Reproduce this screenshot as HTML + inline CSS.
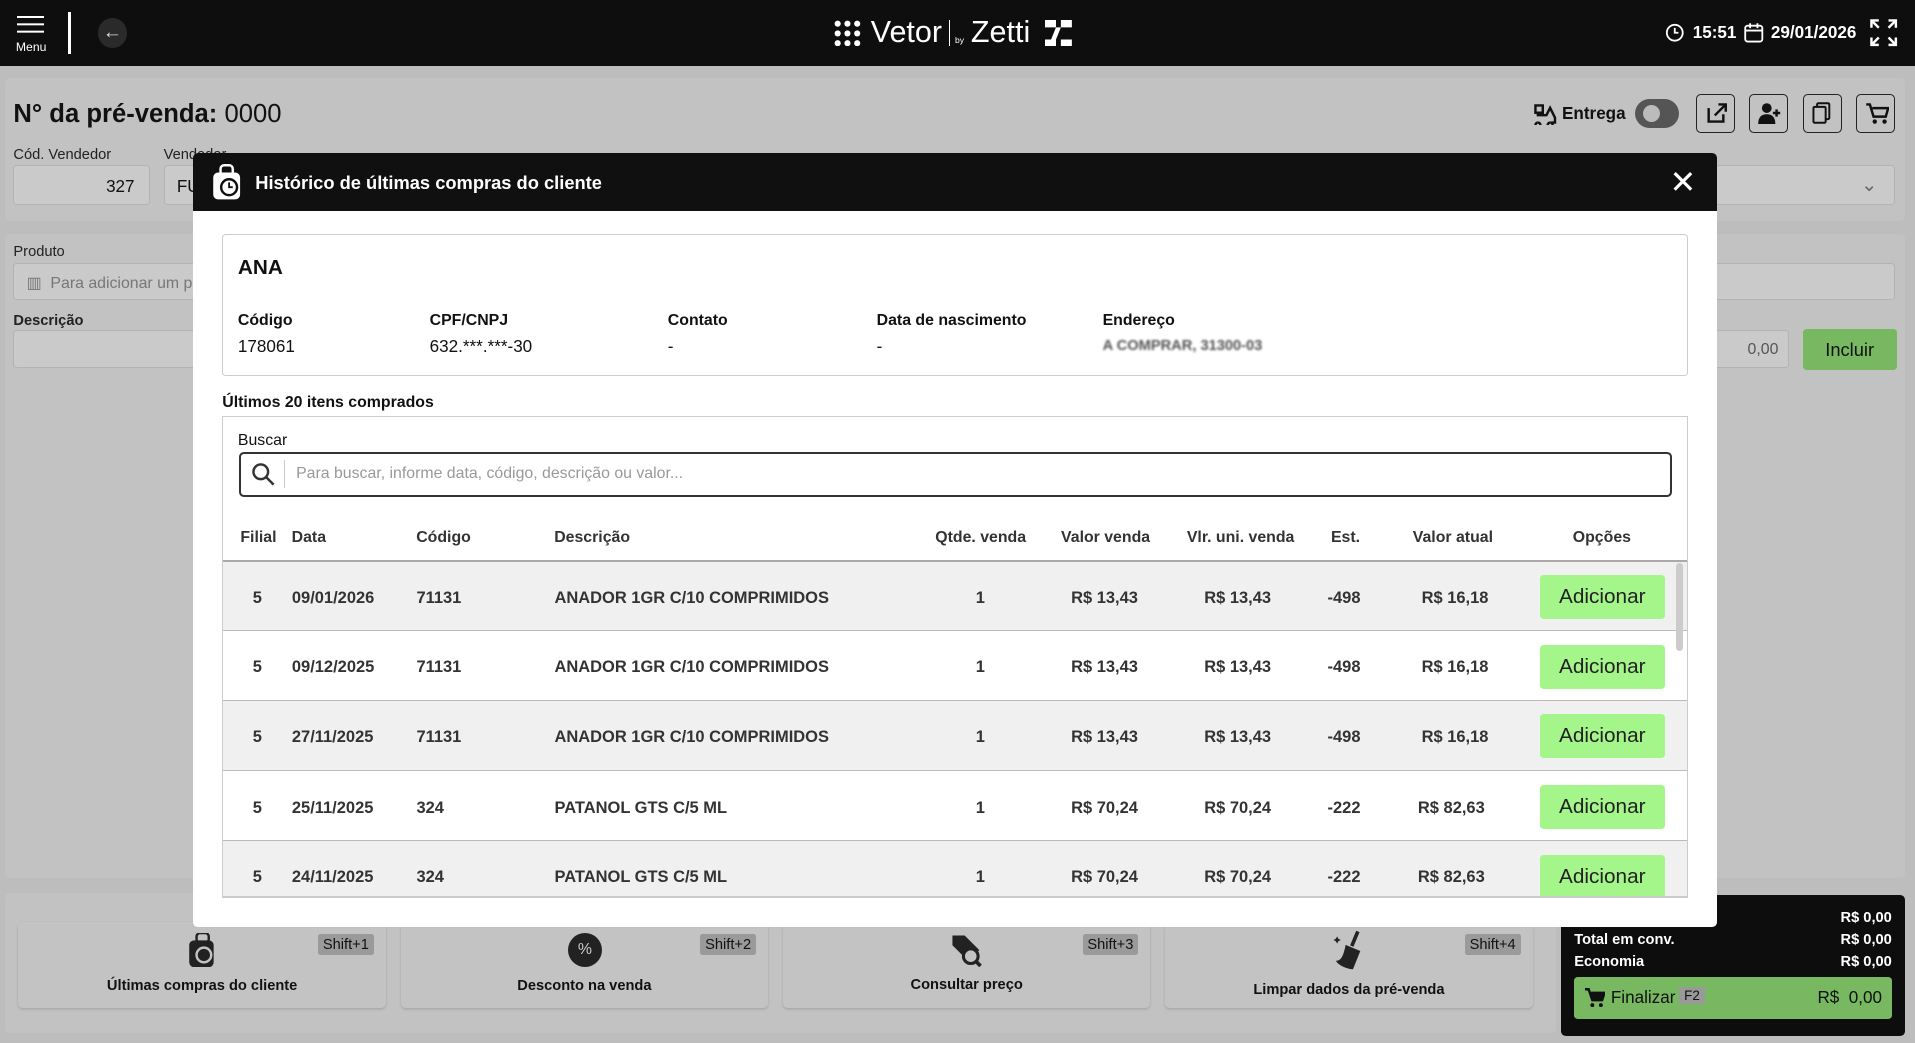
<!DOCTYPE html>
<html><head><meta charset="utf-8"><style>
*{box-sizing:border-box;margin:0;padding:0}
html,body{width:1915px;height:1043px;overflow:hidden;background:#b5b5b5}
#z{zoom:1.22130;width:1568px;height:854px;position:relative;font-family:"Liberation Sans",Arial,sans-serif;color:#111;background:#bdbdbd}
.a{position:absolute}
.hdr{left:0;top:0;width:1568px;height:54px;background:#0e0e0e;color:#fff}
.panel{background:#c2c2c2;border-radius:4px}
.lbl{font-size:12px;color:#222}
.inp{background:#cacaca;border:1px solid #b3b3b3;border-radius:3px}
.ib{width:32px;height:32px;border:1.5px solid #222;border-radius:4px}
.ib svg{position:absolute;left:6px;top:6px}
.card{background:#c3c3c3;border-radius:4px;box-shadow:0 1px 2px rgba(0,0,0,.15)}
.sh{background:#9a9a9a;font-size:12px;padding:2px 4px;border-radius:2px}
.modal{left:158px;top:125px;width:1248px;height:634px;background:#fff;border-radius:4px;overflow:hidden}
.mh{left:0;top:0;width:1248px;height:48px;background:#101010;color:#fff}
.th{font-size:13px;font-weight:bold;color:#333}
.row{left:25px;width:1198px;height:57px;border-bottom:1px solid #bbb;font-size:13.5px;font-weight:bold;color:#333}
.row span{position:absolute;top:22px}
.btn{position:absolute;left:1078px;top:11px;width:102px;height:36px;background:#a4f58a;border-radius:3px;font-size:17px;font-weight:normal;color:#222;text-align:center;line-height:36px}
</style></head><body><div id="z">
<div class="a hdr">
 <div class="a" style="left:14px;top:13px;width:22px;height:2px;background:#fff;box-shadow:0 6px 0 #fff,0 12px 0 #fff"></div>
 <div class="a" style="left:13px;top:33px;font-size:10px">Menu</div>
 <div class="a" style="left:56px;top:10px;width:2px;height:34px;background:#fff"></div>
 <div class="a" style="left:80px;top:15px;width:24px;height:24px;border-radius:50%;background:#2a2a2a;color:#ddd;text-align:center;line-height:23px;font-size:16px">←</div>
 <svg class="a" style="left:683px;top:16px" width="22" height="22"><g fill="#fff"><circle cx="3" cy="3" r="2.5"/><circle cx="11" cy="3" r="2.5"/><circle cx="19" cy="3" r="2.5"/><circle cx="3" cy="11" r="2.5"/><circle cx="11" cy="11" r="2.5"/><circle cx="19" cy="11" r="2.5"/><circle cx="3" cy="19" r="2.5"/><circle cx="11" cy="19" r="2.5"/><circle cx="19" cy="19" r="2.5"/></g></svg>
 <div class="a" style="left:713px;top:12px;font-size:25px">Vetor</div>
 <div class="a" style="left:777px;top:16px;width:1px;height:22px;background:#fff"></div>
 <div class="a" style="left:782px;top:29px;font-size:7px">by</div>
 <div class="a" style="left:795px;top:12px;font-size:25px">Zetti</div>
 <svg class="a" style="left:856px;top:16px" width="22" height="22"><path d="M0 0h9v6H0zM13 0h9v6h-9zM0 16h9v6H0zM13 16h9v6h-9zM9 6h4l-4 10H5z" fill="#fff"/></svg>
 <svg class="a" style="left:1363px;top:19px" width="16" height="16"><circle cx="8" cy="8" r="6.5" stroke="#fff" stroke-width="1.5" fill="none"/><path d="M8 4v4h3" stroke="#fff" stroke-width="1.5" fill="none"/></svg>
 <div class="a" style="left:1386px;top:19px;font-size:14px;font-weight:bold">15:51</div>
 <svg class="a" style="left:1428px;top:18px" width="16" height="17"><rect x="1" y="3" width="14" height="13" rx="2" stroke="#fff" stroke-width="1.5" fill="none"/><path d="M1 7h14M5 1v4M11 1v4" stroke="#fff" stroke-width="1.5"/></svg>
 <div class="a" style="left:1450px;top:19px;font-size:14px;font-weight:bold">29/01/2026</div>
 <svg class="a" style="left:1530px;top:15px" width="24" height="24"><path d="M2 8V2h6M16 2h6v6M22 16v6h-6M8 22H2v-6M2 2l6 6M22 2l-6 6M22 22l-6-6M2 22l6-6" stroke="#fff" stroke-width="2" fill="none"/></svg>
</div>
<div class="a panel" style="left:4px;top:64px;width:1556px;height:117px"></div>
<div class="a" style="left:11px;top:82px;font-size:21px"><b>N° da pré-venda:</b> 0000</div>
<svg class="a" style="left:1255px;top:84px" width="20" height="18"><path d="M2 2h6v6H2zM3 10h8l3-6 4 8v4h-3M4 16a2 2 0 1 0 0.1 0M14 16a2 2 0 1 0 .1 0" stroke="#111" stroke-width="2" fill="none"/></svg>
<div class="a" style="left:1279px;top:85px;font-size:14px;font-weight:bold">Entrega</div>
<div class="a" style="left:1339px;top:81px;width:36px;height:24px;border-radius:12px;background:#555"><div style="margin:5px 0 0 6px;width:14px;height:14px;border-radius:50%;background:#bbb"></div></div>
<div class="a ib" style="left:1389px;top:77px"><svg width="18" height="18"><path d="M3 5v11h12V10M8 11l9-9M11 2h6v6" stroke="#111" stroke-width="2" fill="none"/></svg></div>
<div class="a ib" style="left:1432px;top:77px"><svg width="20" height="18"><circle cx="8" cy="5" r="4" fill="#111"/><path d="M1 18c0-6 3-8 7-8s7 2 7 8z" fill="#111"/><path d="M16 6v6M13 9h6" stroke="#111" stroke-width="2"/></svg></div>
<div class="a ib" style="left:1476px;top:77px"><svg width="18" height="18"><rect x="5" y="1" width="10" height="13" rx="1" stroke="#111" stroke-width="1.6" fill="none"/><rect x="2" y="4" width="10" height="13" rx="1" stroke="#111" stroke-width="1.6" fill="#c2c2c2"/></svg></div>
<div class="a ib" style="left:1520px;top:77px"><svg width="20" height="18"><path d="M1 2h3l3 10h10l2-7H6" stroke="#111" stroke-width="2" fill="none"/><circle cx="8" cy="16" r="1.8" fill="#111"/><circle cx="16" cy="16" r="1.8" fill="#111"/></svg></div>
<div class="a lbl" style="left:11px;top:120px">Cód. Vendedor</div>
<div class="a lbl" style="left:134px;top:120px">Vendedor</div>
<div class="a inp" style="left:11px;top:135px;width:112px;height:33px;text-align:right;padding:9px 12px;font-size:14px">327</div>
<div class="a inp" style="left:134px;top:135px;width:40px;height:33px;padding:9px 10px;font-size:14px">FU</div>
<div class="a inp" style="left:1400px;top:135px;width:152px;height:33px;text-align:right;padding:6px 14px;color:#666">⌄</div>
<div class="a panel" style="left:4px;top:192px;width:1556px;height:527px"></div>
<div class="a lbl" style="left:11px;top:200px">Produto</div>
<div class="a inp" style="left:11px;top:215px;width:160px;height:31px;padding:8px 10px;font-size:13px;color:#777">▥ &nbsp;Para adicionar um p</div>
<div class="a inp" style="left:1400px;top:215px;width:152px;height:31px"></div>
<div class="a lbl" style="left:11px;top:256px;font-weight:bold">Descrição</div>
<div class="a inp" style="left:11px;top:270px;width:160px;height:31px"></div>
<div class="a inp" style="left:1400px;top:270px;width:65px;height:31px;text-align:right;padding:8px 8px;font-size:13px;color:#555">0,00</div>
<div class="a" style="left:1476px;top:269px;width:77px;height:34px;background:#77b860;border-radius:3px;text-align:center;line-height:34px;font-size:15px">Incluir</div>
<div class="a panel" style="left:4px;top:731px;width:1270px;height:115px"></div>
<div class="a card" style="left:15px;top:755px;width:301px;height:70px"><div class="a sh" style="right:10px;top:10px">Shift+1</div><div class="a" style="left:0;width:301px;top:46px;text-align:center;font-size:12px;font-weight:bold">Últimas compras do cliente</div><svg class="a" style="left:139px;top:9px" width="24" height="28"><rect x="7" y="0" width="10" height="8" rx="3" stroke="#222" stroke-width="2" fill="none"/><rect x="1" y="6" width="20" height="22" rx="4" fill="#222"/><circle cx="13" cy="18" r="6" fill="none" stroke="#c3c3c3" stroke-width="2"/></svg></div>
<div class="a card" style="left:328px;top:755px;width:301px;height:70px"><div class="a sh" style="right:10px;top:10px">Shift+2</div><div class="a" style="left:0;width:301px;top:46px;text-align:center;font-size:12px;font-weight:bold">Desconto na venda</div><div class="a" style="left:137px;top:9px;width:28px;height:28px;border-radius:50%;background:#222;color:#ccc;text-align:center;line-height:28px;font-size:13px">%</div></div>
<div class="a card" style="left:641px;top:755px;width:301px;height:70px"><div class="a sh" style="right:10px;top:10px">Shift+3</div><div class="a" style="left:0;width:301px;top:45px;text-align:center;font-size:12px;font-weight:bold">Consultar preço</div><svg class="a" style="left:137px;top:9px" width="28" height="28"><path d="M2 2h10l12 12-9 9L2 10z" fill="#222"/><circle cx="17" cy="19" r="6" fill="#c3c3c3" stroke="#222" stroke-width="2.5"/><path d="M21 23l4 4" stroke="#222" stroke-width="3"/></svg></div>
<div class="a card" style="left:954px;top:755px;width:301px;height:70px"><div class="a sh" style="right:10px;top:10px">Shift+4</div><div class="a" style="left:0;width:301px;top:49px;text-align:center;font-size:12px;font-weight:bold">Limpar dados da pré-venda</div><svg class="a" style="left:136px;top:6px" width="30" height="34"><path d="M22 2l-5 12" stroke="#222" stroke-width="3"/><path d="M12 13l12 5-6 15c-4 0-12-3-14-7 4 0 6-3 8-13z" fill="#222"/><path d="M5 6l1 2 2 1-2 1-1 2-1-2-2-1 2-1z" fill="#222"/></svg></div>
<div class="a" style="left:1278px;top:733px;width:282px;height:115px;background:#0d0d0d;border-radius:4px;color:#fff;font-size:12px;font-weight:bold">
 <div class="a" style="right:11px;top:12px">R$ 0,00</div>
 <div class="a" style="left:11px;top:30px">Total em conv.</div><div class="a" style="right:11px;top:30px">R$ 0,00</div>
 <div class="a" style="left:11px;top:48px">Economia</div><div class="a" style="right:11px;top:48px">R$ 0,00</div>
 <div class="a" style="left:11px;top:67px;width:260px;height:34px;background:#77b860;border-radius:3px;color:#111;font-weight:normal;font-size:14px">
  <svg class="a" style="left:9px;top:9px" width="16" height="16"><path d="M0 1h3l3 9h8l2-6H5" stroke="#111" stroke-width="2" fill="#111"/><circle cx="6" cy="14" r="1.6" fill="#111"/><circle cx="13" cy="14" r="1.6" fill="#111"/></svg>
  <span class="a" style="left:30px;top:9px">Finalizar</span><span class="a" style="left:86px;top:8px;background:#999;font-size:11px;padding:1px 4px">F2</span><span class="a" style="right:8px;top:9px">R$ &nbsp;0,00</span></div>
</div>
<div class="a modal">
 <div class="a mh">
  <svg class="a" style="left:16px;top:9px" width="26" height="30"><rect x="7" y="1" width="10" height="9" rx="3" stroke="#fff" stroke-width="2" fill="none"/><rect x="1" y="7" width="22" height="22" rx="4" fill="#fff"/><circle cx="14" cy="19" r="6.5" fill="none" stroke="#111" stroke-width="2"/><path d="M14 15v4h3" stroke="#111" stroke-width="1.5" fill="none"/></svg>
  <div class="a" style="left:51px;top:16px;font-size:15px;font-weight:bold">Histórico de últimas compras do cliente</div>
  <div class="a" style="left:1209px;top:9px;font-size:26px">✕</div>
 </div>
 <div class="a" style="left:24px;top:67px;width:1200px;height:116px;border:1px solid #ccc;border-radius:3px">
  <div class="a" style="left:12px;top:17px;font-size:17px;font-weight:bold">ANA</div>
  <div class="a th" style="left:12px;top:63px;color:#111">Código</div><div class="a" style="left:12px;top:83px;font-size:14px">178061</div>
  <div class="a th" style="left:169px;top:63px;color:#111">CPF/CNPJ</div><div class="a" style="left:169px;top:83px;font-size:14px">632.***.***-30</div>
  <div class="a th" style="left:364px;top:63px;color:#111">Contato</div><div class="a" style="left:364px;top:83px;font-size:14px">-</div>
  <div class="a th" style="left:535px;top:63px;color:#111">Data de nascimento</div><div class="a" style="left:535px;top:83px;font-size:14px">-</div>
  <div class="a th" style="left:720px;top:63px;color:#111">Endereço</div><div class="a" style="left:720px;top:84px;font-size:12px;color:#555;font-weight:bold;filter:blur(0.8px)">A COMPRAR, 31300-03</div>
 </div>
 <div class="a" style="left:24px;top:198px;font-size:13px;font-weight:bold">Últimos 20 itens comprados</div>
 <div class="a" style="left:24px;top:216px;width:1200px;height:394px;border:1px solid #ccc;border-bottom:none;overflow:hidden">
  <div class="a" style="left:12px;top:12px;font-size:13px">Buscar</div>
  <div class="a" style="left:13px;top:28px;width:1173px;height:37px;border:2px solid #333;border-radius:4px">
   <svg class="a" style="left:8px;top:7px" width="20" height="20"><circle cx="8" cy="8" r="6" stroke="#333" stroke-width="2" fill="none"/><path d="M12.5 12.5l6 6" stroke="#333" stroke-width="2"/></svg>
   <div class="a" style="left:35px;top:5px;width:1px;height:23px;background:#ccc"></div>
   <div class="a" style="left:45px;top:9px;font-size:13px;color:#999">Para buscar, informe data, código, descrição ou valor...</div>
  </div>
  <div class="a th" style="left:14px;top:91px">Filial</div><div class="a th" style="left:56px;top:91px">Data</div><div class="a th" style="left:158px;top:91px">Código</div><div class="a th" style="left:271px;top:91px">Descrição</div><div class="a th" style="left:583px;top:91px">Qtde. venda</div><div class="a th" style="left:686px;top:91px">Valor venda</div><div class="a th" style="left:789px;top:91px">Vlr. uni. venda</div><div class="a th" style="left:907px;top:91px">Est.</div><div class="a th" style="left:974px;top:91px">Valor atual</div><div class="a th" style="left:1105px;top:91px">Opções</div>
  <div class="a" style="left:0;top:117px;width:1200px;height:1px;background:#aaa"></div>
 </div>
 <div class="a row" style="top:335px;background:#f0f0f0"><span style="left:24px">5</span><span style="left:56px">09/01/2026</span><span style="left:158px">71131</span><span style="left:271px">ANADOR 1GR C/10 COMPRIMIDOS</span><span style="left:616px">1</span><span style="left:694px">R$ 13,43</span><span style="left:803px">R$ 13,43</span><span style="left:904px">-498</span><span style="left:981px">R$ 16,18</span><div class="btn">Adicionar</div></div>
 <div class="a row" style="top:392px;background:#fff"><span style="left:24px">5</span><span style="left:56px">09/12/2025</span><span style="left:158px">71131</span><span style="left:271px">ANADOR 1GR C/10 COMPRIMIDOS</span><span style="left:616px">1</span><span style="left:694px">R$ 13,43</span><span style="left:803px">R$ 13,43</span><span style="left:904px">-498</span><span style="left:981px">R$ 16,18</span><div class="btn">Adicionar</div></div>
 <div class="a row" style="top:449px;background:#f0f0f0"><span style="left:24px">5</span><span style="left:56px">27/11/2025</span><span style="left:158px">71131</span><span style="left:271px">ANADOR 1GR C/10 COMPRIMIDOS</span><span style="left:616px">1</span><span style="left:694px">R$ 13,43</span><span style="left:803px">R$ 13,43</span><span style="left:904px">-498</span><span style="left:981px">R$ 16,18</span><div class="btn">Adicionar</div></div>
 <div class="a row" style="top:507px;background:#fff"><span style="left:24px">5</span><span style="left:56px">25/11/2025</span><span style="left:158px">324</span><span style="left:271px">PATANOL GTS C/5 ML</span><span style="left:616px">1</span><span style="left:694px">R$ 70,24</span><span style="left:803px">R$ 70,24</span><span style="left:904px">-222</span><span style="left:978px">R$ 82,63</span><div class="btn">Adicionar</div></div>
 <div class="a row" style="top:564px;height:46px;background:#f0f0f0;border-bottom:2px solid #ccc;overflow:hidden"><span style="left:24px">5</span><span style="left:56px">24/11/2025</span><span style="left:158px">324</span><span style="left:271px">PATANOL GTS C/5 ML</span><span style="left:616px">1</span><span style="left:694px">R$ 70,24</span><span style="left:803px">R$ 70,24</span><span style="left:904px">-222</span><span style="left:978px">R$ 82,63</span><div class="btn">Adicionar</div></div>
 <div class="a" style="left:1214px;top:336px;width:6px;height:72px;background:#ccc;border-radius:3px"></div>
</div>
</div></body></html>
